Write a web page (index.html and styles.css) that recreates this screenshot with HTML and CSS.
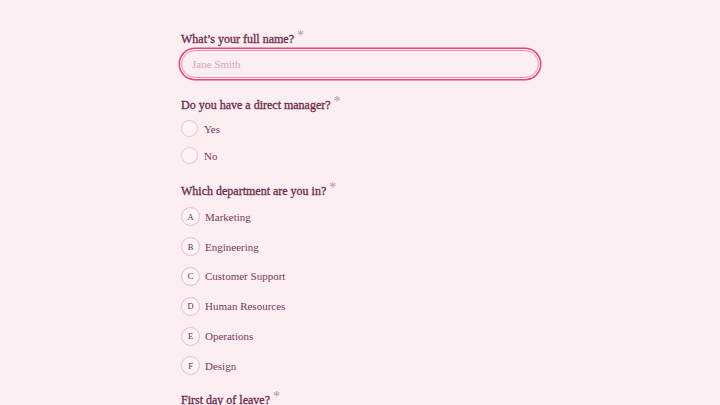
FILE: index.html
```html
<!DOCTYPE html>
<html lang="en">
<head>
<meta charset="utf-8">
<title>Leave request</title>
<link rel="stylesheet" href="styles.css">
</head>
<body>
<main class="form">
  <section class="question q-name">
    <label class="q-label" for="fullname">What’s your full name?<span class="req">*</span></label>
    <input class="text-input" id="fullname" type="text" placeholder="Jane Smith">
  </section>

  <section class="question q-manager">
    <div class="q-label">Do you have a direct manager?<span class="req">*</span></div>
    <div class="options">
      <div class="radio-row"><span class="radio"></span><span class="opt-text">Yes</span></div>
      <div class="radio-row"><span class="radio"></span><span class="opt-text">No</span></div>
    </div>
  </section>

  <section class="question q-dept">
    <div class="q-label">Which department are you in?<span class="req">*</span></div>
    <div class="options">
      <div class="choice-row"><span class="key">A</span><span class="opt-text">Marketing</span></div>
      <div class="choice-row"><span class="key">B</span><span class="opt-text">Engineering</span></div>
      <div class="choice-row"><span class="key">C</span><span class="opt-text">Customer Support</span></div>
      <div class="choice-row"><span class="key">D</span><span class="opt-text">Human Resources</span></div>
      <div class="choice-row"><span class="key">E</span><span class="opt-text">Operations</span></div>
      <div class="choice-row"><span class="key">F</span><span class="opt-text">Design</span></div>
    </div>
  </section>

  <section class="question q-leave">
    <div class="q-label">First day of leave?<span class="req">*</span></div>
  </section>
</main>
</body>
</html>
```

FILE: styles.css
```css
html, body {
  margin: 0;
  padding: 0;
  background: #fdeef2;
  overflow: hidden;
}

body {
  font-family: "Liberation Serif", "Times New Roman", serif;
  color: #6b2b4e;
}

.form {
  width: 360px;
  margin: 0 auto;
  padding-top: 29px;
  display: flex;
  flex-direction: column;
}

.question {
  display: flex;
  flex-direction: column;
}

.q-manager { margin-top: 17px; }
.q-dept { margin-top: 12px; }
.q-leave { margin-top: 9px; }

.q-label {
  display: block;
  font-size: 12px;
  line-height: 18px;
  height: 18px;
  color: #6a2a4c;
  -webkit-text-stroke: 0.3px #6a2a4c;
  white-space: nowrap;
  padding-left: 1px;
}

.req {
  display: inline-block;
  margin-left: 3px;
  font-size: 14px;
  line-height: 1;
  color: #b195a4;
  -webkit-text-stroke: 0;
  vertical-align: 3px;
}

.text-input {
  box-sizing: border-box;
  margin: 3px 1px 0;
  height: 28px;
  width: 358px;
  border: 1px solid #ee8fb0;
  border-radius: 14px;
  background: #fdeef2;
  box-shadow: 0 0 0 1px #fdeef2, 0 0 0 2.5px #e2457f;
  outline: none;
  padding: 0 10px;
  font-family: "Liberation Serif", "Times New Roman", serif;
  font-size: 11px;
  color: #6b2b4e;
}

.text-input::placeholder {
  color: #d7a3b7;
}

.options {
  display: flex;
  flex-direction: column;
  margin-top: 2px;
}

.q-dept .options { margin-top: 3px; }

.radio-row,
.choice-row {
  display: flex;
  align-items: center;
  padding-left: 1px;
}

.radio-row { height: 27px; gap: 6px; }
.choice-row { height: 29.8px; gap: 5px; }

.radio {
  box-sizing: border-box;
  width: 17px;
  height: 17px;
  border-radius: 50%;
  border: 1.5px solid #efbdd0;
  background: #fef3f6;
}

.key {
  box-sizing: border-box;
  width: 19px;
  height: 19px;
  border-radius: 50%;
  border: 1.5px solid #ecbacd;
  background: #fef3f6;
  display: flex;
  align-items: center;
  justify-content: center;
  font-size: 8.5px;
  color: #6b2b4e;
}

.opt-text {
  font-size: 11px;
  line-height: 14px;
  color: #7a3a5d;
}
```
